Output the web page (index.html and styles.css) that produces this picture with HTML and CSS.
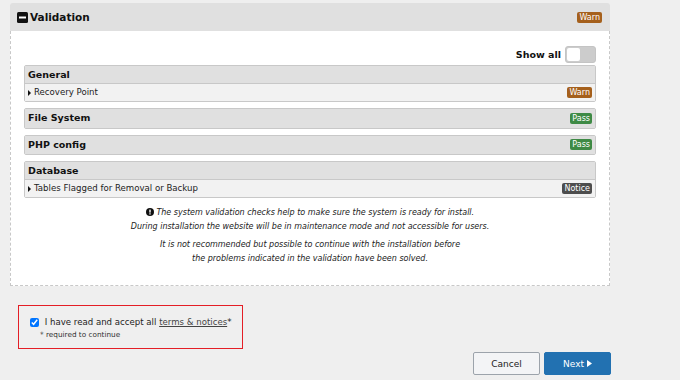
FILE: index.html
```html
<!DOCTYPE html>
<html>
<head>
<meta charset="utf-8">
<link rel="stylesheet" href="styles.css">
</head>
<body>
<div class="wrap">
  <div class="panel">
    <div class="panel-head">
      <span class="minus-icon"><svg width="11" height="11" viewBox="0 0 11 11"><rect x="0" y="0" width="11" height="11" rx="1.5" fill="#111"/><rect x="2" y="4.5" width="7" height="2" fill="#fff"/></svg></span>
      <span class="panel-title">Validation</span>
      <span class="badge warn">Warn</span>
    </div>
    <div class="panel-body">
      <div class="showall-row">
        <span class="showall-label">Show all</span>
        <span class="toggle"><span class="knob"></span></span>
      </div>
      <div class="section">
        <div class="sec-head">General</div>
        <div class="sec-row"><span class="caret"></span><span class="row-text">Recovery Point</span><span class="badge warn">Warn</span></div>
      </div>
      <div class="section">
        <div class="sec-head last">File System<span class="badge pass">Pass</span></div>
      </div>
      <div class="section">
        <div class="sec-head last">PHP config<span class="badge pass">Pass</span></div>
      </div>
      <div class="section">
        <div class="sec-head">Database</div>
        <div class="sec-row"><span class="caret"></span><span class="row-text">Tables Flagged for Removal or Backup</span><span class="badge notice">Notice</span></div>
      </div>
      <div class="info">
        <p><svg class="info-icon" width="8" height="8" viewBox="0 0 8 8"><circle cx="4" cy="4" r="4" fill="#111"/><rect x="3.3" y="1.6" width="1.4" height="3" fill="#fff"/><rect x="3.3" y="5.3" width="1.4" height="1.2" fill="#fff"/></svg> The system validation checks help to make sure the system is ready for install.<br>During installation the website will be in maintenance mode and not accessible for users.</p>
        <p>It is not recommended but possible to continue with the installation before<br>the problems indicated in the validation have been solved.</p>
      </div>
    </div>
  </div>

  <div class="accept">
    <label class="accept-line"><input type="checkbox" checked class="chk"> I have read and accept all <span class="terms">terms &amp; notices</span>*</label>
    <div class="required">* required to continue</div>
  </div>

  <div class="buttons">
    <button class="btn cancel">Cancel</button>
    <button class="btn next">Next <svg width="5" height="7" viewBox="0 0 5 7"><path d="M0 0 L5 3.5 L0 7 Z" fill="#fff"/></svg></button>
  </div>
</div>
</body>
</html>
```

FILE: styles.css
```css
html, body {
  margin: 0;
  padding: 0;
  background: #efefef;
  font-family: "DejaVu Sans", Verdana, sans-serif;
  color: #111;
}
.wrap {
  width: 600px;
  padding: 3px 0 0 10px;
}
.panel-head {
  height: 28px;
  background: #e0e0e0;
  border-radius: 3px 3px 0 0;
  display: flex;
  align-items: center;
  padding: 0 8px 0 7px;
}
.minus-icon {
  display: flex;
  margin-right: 2px;
}
.panel-title {
  font-weight: bold;
  font-size: 10.5px;
  flex: 1;
}
.badge {
  display: inline-block;
  color: #fff;
  font-size: 8px;
  line-height: 11px;
  height: 11px;
  padding: 0 2px;
  border-radius: 2px;
  font-weight: normal;
}
.badge.warn { background: #a5601c; }
.badge.pass { background: #3e8a45; }
.badge.notice { background: #4d4d4d; }
.panel-body {
  background: #fff;
  border: 1px dashed #c8c8c8;
  border-top: none;
  padding: 14px 13px 0 13px;
  height: 240px;
}
.showall-row {
  display: flex;
  justify-content: flex-end;
  align-items: center;
  height: 18px;
  margin-bottom: 2px;
}
.showall-label {
  font-weight: bold;
  font-size: 9.5px;
  margin-right: 4px;
}
.toggle {
  width: 31px;
  height: 17px;
  background: #cccccc;
  border: 1px solid #c4c4c4;
  border-radius: 3px;
  box-sizing: border-box;
  display: flex;
  align-items: center;
  padding-left: 1px;
}
.knob {
  width: 13px;
  height: 13px;
  background: #fff;
  border-radius: 2px;
}
.section {
  border: 1px solid #c8c8c8;
  border-radius: 2px;
  margin-bottom: 6px;
}
.sec-head {
  box-sizing: border-box;
  height: 18px;
  background: #e0e0e0;
  border-bottom: 1px solid #c8c8c8;
  display: flex;
  align-items: center;
  justify-content: space-between;
  padding: 0 3px 0 3px;
  font-weight: bold;
  font-size: 9.5px;
  line-height: 12px;
}
.sec-head.last {
  border-bottom: none;
  height: 18.5px;
}
.sec-row {
  box-sizing: border-box;
  height: 17px;
  background: #f2f2f2;
  display: flex;
  align-items: center;
  padding: 0 3px 0 3px;
  font-size: 8.6px;
  line-height: 11px;
  color: #222;
}
.caret {
  width: 0;
  height: 0;
  border-left: 3px solid #111;
  border-top: 3px solid transparent;
  border-bottom: 3px solid transparent;
  margin-right: 3px;
}
.row-text { flex: 1; }
.info {
  text-align: center;
  font-style: italic;
  font-size: 8px;
  color: #222;
  margin-top: 8px;
}
.info p {
  margin: 0 0 4px 0;
  line-height: 14px;
}
.info-icon { vertical-align: -1px; }
.accept {
  margin: 19px 0 0 8px;
  width: 223px;
  height: 42px;
  border: 1px solid #e41e26;
  box-sizing: content-box;
  padding: 0;
}
.accept-line {
  display: flex;
  align-items: center;
  font-size: 8.6px;
  color: #222;
  margin: 11px 0 0 11px;
  white-space: pre;
}
.chk {
  margin: 0 3px 0 0;
  width: 9px;
  height: 9px;
}
.terms { text-decoration: underline; color: #444; }
.required {
  font-size: 7.3px;
  color: #333;
  margin: 3px 0 0 21px;
}
.buttons {
  display: flex;
  justify-content: flex-end;
  gap: 4px;
  margin-top: 3px;
  width: 601px;
}
.btn {
  height: 23px;
  width: 67px;
  font-family: "DejaVu Sans", Verdana, sans-serif;
  font-size: 9px;
  border-radius: 2px;
  padding: 0;
}
.btn.cancel {
  background: #f3f4f6;
  border: 1px solid #9ca3ab;
  color: #222;
}
.btn.next {
  background: #2271b1;
  border: 1px solid #2271b1;
  color: #fff;
}
```
